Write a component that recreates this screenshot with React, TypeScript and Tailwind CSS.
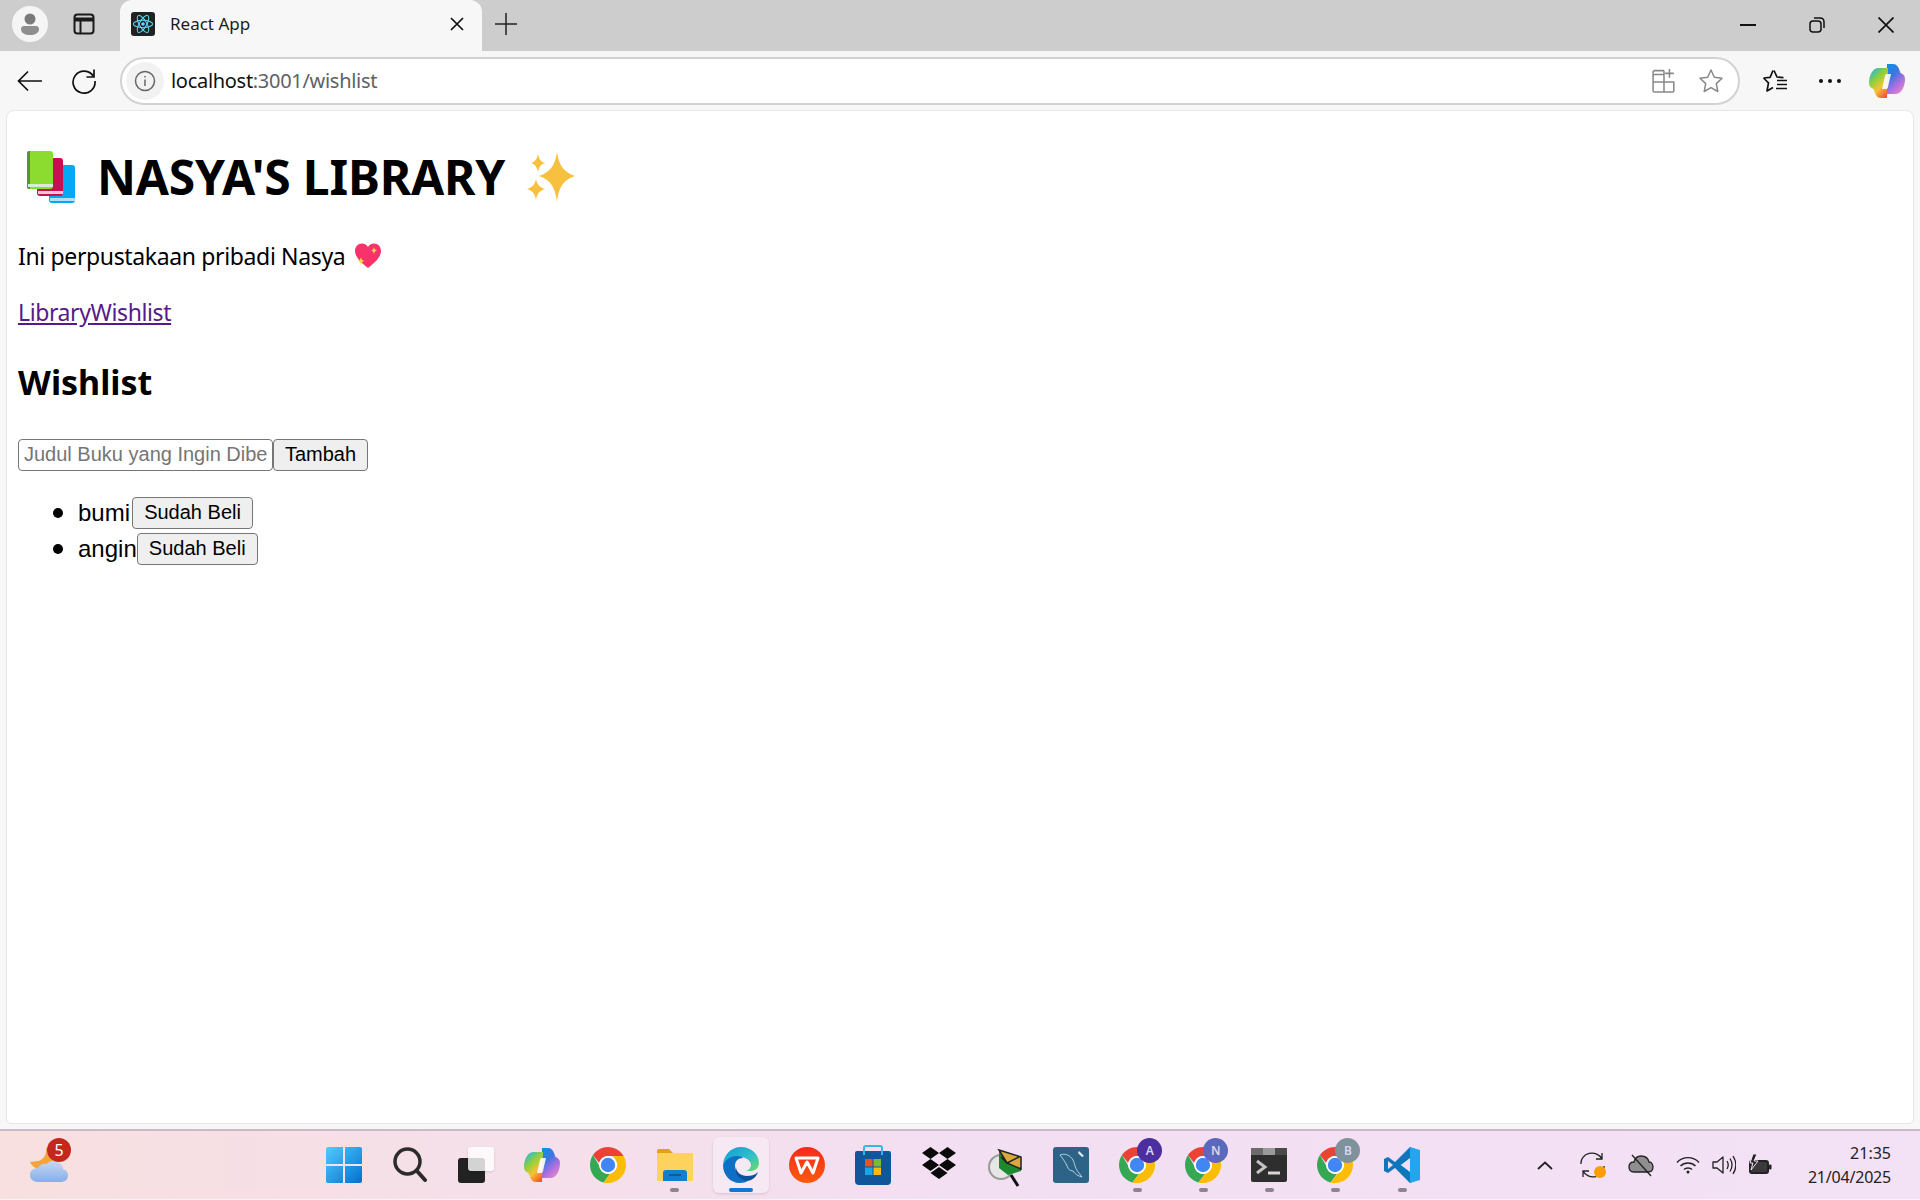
import React from "react";

const Chrome = ({ s = 36 }: { s?: number }) => (
  <svg width={s} height={s} viewBox="4 4 40 40">
    <path fill="#EA4335" d="M24 4c7.400 0 13.900 4 17.300 10H24c-4.800 0-8.800 3.400-9.800 7.900L7.300 13C11 7.600 17.100 4 24 4z" />
    <path fill="#34A853" d="M7.300 13l8.700 15c1.700 3 4.600 6 8 6 .8 0 1.600-.1 2.300-.3L19 43.400C10.500 41.200 4 33.400 4 24c0-4 1.200-7.800 3.300-11z" />
    <path fill="#FBBC04" d="M41.300 14C43 17 44 20.400 44 24c0 11-9 20-20 20-1.700 0-3.400-.2-5-.6L26.300 33.700C30.700 32.700 34 28.700 34 24c0-3.900-2-7.800-5-10z" />
    <circle cx="24" cy="24" r="10" fill="#fff" />
    <circle cx="24" cy="24" r="8" fill="#4285F4" />
  </svg>
);

const Copilot = ({ s = 36, id }: { s?: number; id: string }) => (
  <svg width={s} height={s} viewBox="0 0 36 36">
    <defs>
      <linearGradient id={id + "a"} x1="0.2" y1="0" x2="0.8" y2="1">
        <stop offset="0" stopColor="#0f8fe6" />
        <stop offset="0.35" stopColor="#3f74e0" />
        <stop offset="0.65" stopColor="#a66fe0" />
        <stop offset="1" stopColor="#ec86c8" />
      </linearGradient>
      <linearGradient id={id + "b"} x1="0.2" y1="0" x2="0.8" y2="1">
        <stop offset="0" stopColor="#29b8d8" />
        <stop offset="0.35" stopColor="#8fd13a" />
        <stop offset="0.65" stopColor="#f7c233" />
        <stop offset="1" stopColor="#f4553a" />
      </linearGradient>
    </defs>
    <path fill={`url(#${id}a)`} d="M18 1h6c3 0 5 2 6 5l1.500 4c3 1 4.500 3 4.500 6 0 7-3 15-10 15h-9z" />
    <path fill={`url(#${id}b)`} d="M18 35h-6c-3 0-5-2-6-5L4.500 26C1.500 25 0 23 0 20 0 13 3 5 10 5h9z" />
    <path fill="#fff" opacity="0.9" d="M22 11h-4c-1 0-1.500.5-2 2l-3 13h4c1 0 1.500-.5 2-2z" />
  </svg>
);

const Slot = ({ children, dot, active }: { children: React.ReactNode; dot?: boolean; active?: boolean }) => (
  <div className="relative flex h-[56px] w-[66.1px] shrink-0 items-center justify-center">
    {active && <div className="absolute left-[5px] top-0 h-[56px] w-[56px] rounded-md bg-[#f6e9f3] shadow-sm" />}
    <div className="relative flex items-center justify-center">{children}</div>
    {dot && <div className="absolute bottom-[1px] left-[29px] h-[4px] w-[9px] rounded-full bg-[#8d8490]" />}
    {active && <div className="absolute bottom-[1px] left-[21px] h-[4px] w-[24px] rounded-full bg-[#0f78d4]" />}
  </div>
);

const ChromeBadge = ({ l, c }: { l: string; c: string }) => (
  <div className="relative h-[36px] w-[36px]">
    <Chrome />
    <div
      className={`absolute -right-[7px] -top-[9px] flex h-[25px] w-[25px] items-center justify-center rounded-full text-[12px] font-semibold text-[#d9d6ec] ${c}`}
    >
      {l}
    </div>
  </div>
);

const ui = "font-['Noto_Sans','Open_Sans',sans-serif]";
const page = "font-['Noto_Sans','Open_Sans',sans-serif]";
const ctl = "font-['Liberation_Sans',Arial,sans-serif]";

const FormBtn = ({ children, w }: { children: React.ReactNode; w: string }) => (
  <button className={`h-[32px] ${w} shrink-0 rounded-[4px] border-[1.5px] border-[#767676] bg-[#efefef] pb-[2px] text-[20px] leading-none text-black ${ctl}`}>
    {children}
  </button>
);

export default function App() {
  return (
    <div className={`flex h-[1200px] w-[1920px] flex-col overflow-hidden bg-[#f7f7f7] ${ui}`}>
      {/* tab strip */}
      <div className="flex h-[51px] shrink-0 items-stretch bg-[#cdcdcd]">
        <div className="flex w-[60px] items-center justify-center pb-[3px]">
          <div className="flex h-[36px] w-[36px] items-center justify-center rounded-full bg-[#f5f5f5]">
            <svg width="20" height="24" viewBox="0 0 20 24">
              <circle cx="10" cy="7" r="5.500" fill="#7a7a7a" />
              <path d="M1 17c0-2 1.500-3 3-3h12c1.500 0 3 1 3 3 0 4-4 6-9 6s-9-2-9-6z" fill="#8e8e8e" />
            </svg>
          </div>
        </div>
        <div className="flex w-[60px] items-center justify-center pb-[3px] pr-[12px]">
          <svg width="22" height="22" viewBox="0 0 22 22" fill="none" stroke="#1a1a1a" strokeWidth="2">
            <rect x="1.500" y="1.500" width="19" height="19" rx="3" />
            <path d="M1.500 6.500h19" strokeWidth="4" />
            <path d="M7.500 7v13" />
          </svg>
        </div>
        <div className="flex w-[362px] items-center rounded-t-xl bg-[#f7f7f7] pb-[3px]">
          <div className="ml-[11px] flex h-[24px] w-[24px] items-center justify-center rounded-[3px] bg-[#222]">
            <svg width="22" height="22" viewBox="-12 -12 24 24" fill="none" stroke="#61dafb" strokeWidth="1.100">
              <circle r="2" fill="#61dafb" stroke="none" />
              <ellipse rx="10.500" ry="4" />
              <ellipse rx="10.500" ry="4" transform="rotate(60)" />
              <ellipse rx="10.500" ry="4" transform="rotate(120)" />
            </svg>
          </div>
          <span className="ml-[15px] text-[17px] text-[#1c1c1c]">React App</span>
          <svg className="ml-auto mr-[18px]" width="14" height="14" viewBox="0 0 14 14" stroke="#111" strokeWidth="1.700">
            <path d="M1 1l12 12M13 1L1 13" />
          </svg>
        </div>
        <div className="flex w-[48px] items-center justify-center pb-[3px]">
          <svg width="22" height="22" viewBox="0 0 22 22" stroke="#222" strokeWidth="1.500">
            <path d="M11 0v22M0 11h22" />
          </svg>
        </div>
        <div className="ml-auto flex items-center pb-[1px]">
          <div className="flex w-[69px] justify-center">
            <svg width="16" height="2" viewBox="0 0 16 2"><path d="M0 1h16" stroke="#111" strokeWidth="2" /></svg>
          </div>
          <div className="flex w-[69px] justify-center">
            <svg width="16" height="16" viewBox="0 0 16 16" fill="none" stroke="#111" strokeWidth="1.500">
              <rect x="1" y="4" width="11" height="11" rx="3" />
              <path d="M5 1h6c2.500 0 4 1.500 4 4v6" />
            </svg>
          </div>
          <div className="flex w-[69px] justify-center">
            <svg width="16" height="16" viewBox="0 0 16 16" stroke="#111" strokeWidth="1.700">
              <path d="M.5.500l15 15M15.500.500l-15 15" />
            </svg>
          </div>
        </div>
      </div>

      {/* toolbar */}
      <div className="flex h-[59px] shrink-0 items-center">
        <div className="flex w-[59px] justify-center">
          <svg width="26" height="22" viewBox="0 0 26 22" fill="none" stroke="#111" strokeWidth="1.700">
            <path d="M25 11H1.500M11 1.500L1.500 11l9.500 9.500" />
          </svg>
        </div>
        <div className="flex w-[50px] justify-center">
          <svg width="26" height="26" viewBox="0 0 26 26" fill="none" stroke="#111" strokeWidth="1.700">
            <path d="M22.500 8.500A11 11 0 1 0 24 13" />
            <path d="M23 1.500v7.500h-7.500" />
          </svg>
        </div>
        <div className="ml-[11px] flex h-[48px] w-[1620px] shrink-0 items-center rounded-full border-[2px] border-[#d2d2d2] bg-white">
          <div className="ml-[4px] flex h-[38px] w-[38px] items-center justify-center rounded-full bg-[#f2f2f2]">
            <svg width="22" height="22" viewBox="0 0 22 22" fill="none" stroke="#666" strokeWidth="1.500">
              <circle cx="11" cy="11" r="9.500" />
              <path d="M11 9.500v6.500M11 6v1.500" />
            </svg>
          </div>
          <span className="ml-[7px] text-[20px] tracking-[-0.3px] text-[#111]">
            localhost<span className="text-[#5d6168]">:3001/wishlist</span>
          </span>
          <div className="ml-auto flex items-center">
            <svg width="24" height="24" viewBox="0 0 22 22" fill="none" stroke="#888" strokeWidth="1.400">
              <path d="M11 5H2.500a1.500 1.500 0 0 0-1.500 1.500V20a1 1 0 0 0 1 1h17a1 1 0 0 0 1-1v-8H1M11 1.500H2.500A1.500 1.500 0 0 0 1 3v9M11 1.500V21" />
              <path d="M16 0v8M12 4h8" />
            </svg>
            <svg className="ml-[22px] mr-[14px]" width="26" height="26" viewBox="0 0 26 26" fill="none" stroke="#888" strokeWidth="1.500" strokeLinejoin="round">
              <path d="M13 2l3.300 7.300 7.700.9-5.700 5.400 1.500 7.900L13 19.600l-6.800 3.900 1.500-7.900L2 10.200l7.700-.9z" />
            </svg>
          </div>
        </div>
        <div className="ml-[15px] flex w-[40px] justify-center">
          <svg width="26" height="24" viewBox="0 0 26 24" fill="none" stroke="#111" strokeWidth="1.700" strokeLinejoin="round">
            <path d="M12 1.500l3 6.500 6.500.7M1.500 9l6.600-.7L11 1.500M1.500 9l5 4.800L5 22l6-3.500" />
            <path d="M15 11.500h10M15 15.500h10M14 19.500h11" />
          </svg>
        </div>
        <div className="ml-[15px] flex w-[40px] items-center justify-center gap-[5px]">
          <span className="h-[4px] w-[4px] rounded-full bg-[#111]" />
          <span className="h-[4px] w-[4px] rounded-full bg-[#111]" />
          <span className="h-[4px] w-[4px] rounded-full bg-[#111]" />
        </div>
        <div className="ml-[19px]">
          <Copilot id="cp1" />
        </div>
      </div>

      {/* page */}
      <div className={`mx-[6px] h-[1014px] shrink-0 rounded-t-lg rounded-b-md border border-[#e6e6e6] bg-white px-[11px] text-black ${page}`}>
        <h1 className="mt-[34px] flex h-[64px] items-center text-[48px] font-bold leading-none tracking-[-0.2px]">
          <svg className="ml-[9px] shrink-0" width="48" height="52" viewBox="0 0 48 52">
            <rect x="22" y="14" width="26" height="38" rx="3" fill="#03a9f4" />
            <rect x="23" y="47" width="25" height="3" fill="#b3dff5" />
            <rect x="10" y="7" width="26" height="38" rx="3" fill="#c8104f" />
            <rect x="11" y="40" width="25" height="3" fill="#f3c6d6" />
            <rect x="0" y="0" width="26" height="38" rx="3" fill="#8bdc2f" />
            <path d="M3 0v38H2a2 2 0 0 1-2-2V2a2 2 0 0 1 2-2z" fill="#4a9a3a" />
            <rect x="1" y="33" width="25" height="3" fill="#d6ecd6" />
          </svg>
          <span className="ml-[22px] whitespace-nowrap">NASYA&apos;S LIBRARY</span>
          <svg className="ml-[22px] shrink-0" width="48" height="50" viewBox="0 0 48 50" fill="#f8c03f">
            <path d="M30 0c2 14 7 20 18 24-11 4-16 10-18 26-2-16-7-22-18-26C23 20 28 14 30 0z" />
            <path d="M11 2c1 5 3 8 7 9-4 1-6 4-7 9-1-5-3-8-7-9 4-1 6-4 7-9z" />
            <path d="M9 27c1 5 3 8 9 10-6 2-8 5-9 11-1-6-3-9-9-11 6-2 8-5 9-10z" />
          </svg>
        </h1>
        <p className="mt-[31px] flex h-[32px] items-center text-[23px] leading-none tracking-[-0.36px]">
          <span>Ini perpustakaan pribadi Nasya</span>
          <svg className="ml-[10px]" width="26" height="26" viewBox="0 0 26 26">
            <path d="M13 25C4 18 0 13 0 8c0-4.500 3.200-7.500 7-7.500 2.600 0 4.800 1.400 6 3.600C14.200 1.900 16.400.500 19 .500c3.800 0 7 3 7 7.500 0 5-4 10-13 17z" fill="#f8326a" />
            <path d="M19 4c.4 2 1 3 3 3.500-2 .5-2.600 1.500-3 3.500-.4-2-1-3-3-3.500 2-.5 2.600-1.500 3-3.500zM6 14c.4 2.400 1.200 3.600 3.500 4-2.300.4-3.100 1.600-3.500 4-.4-2.400-1.200-3.600-3.500-4 2.300-.4 3.100-1.600 3.500-4z" fill="#ffd34d" />
          </svg>
        </p>
        <nav className="mt-[24px] h-[32px] text-[23px] leading-[32px] tracking-[-0.4px] text-[#551a8b] underline">
          <a href="#library">Library</a>
          <a href="#wishlist">Wishlist</a>
        </nav>
        <h2 className="mt-[30px] h-[48px] text-[34px] font-bold leading-[48px]">Wishlist</h2>
        <form className="mt-[33px] flex h-[32px]">
          <input
            readOnly
            placeholder="Judul Buku yang Ingin Dibeli"
            className={`h-[32px] w-[255px] rounded-[4px] border-[1.5px] border-[#767676] bg-white pb-[2px] pl-[5px] pr-[4px] text-[20px] text-black placeholder:text-[#757575] ${ctl}`}
          />
          <FormBtn w="w-[95px]">Tambah</FormBtn>
        </form>
        <ul className={`mt-[26px] list-none pl-[35px] text-[24px] leading-none ${ctl}`}>
          <li className="flex h-[36px] items-start">
            <div className="flex h-[32px] items-center">
              <span className="mr-[15px] h-[10px] w-[10px] rounded-full bg-black" />
              <span className="mr-[2px]">bumi</span>
              <FormBtn w="w-[121px]">Sudah Beli</FormBtn>
            </div>
          </li>
          <li className="flex h-[36px] items-start">
            <div className="flex h-[32px] items-center">
              <span className="mr-[15px] h-[10px] w-[10px] rounded-full bg-black" />
              <span>angin</span>
              <FormBtn w="w-[121px]">Sudah Beli</FormBtn>
            </div>
          </li>
        </ul>
      </div>

      {/* taskbar */}
      <div className="mt-[5px] flex h-[70px] shrink-0 items-center border-t-[2px] border-[#c9b9c7] bg-gradient-to-r from-[#f8e0e0] via-[#f3dff2] to-[#f3e1f5] text-[#222]">
        <div className="flex w-[311px] shrink-0 pl-[30px]">
          <div className="relative h-[36px] w-[36px]">
            <svg width="38" height="36" viewBox="0 0 38 36">
              <defs>
                <linearGradient id="cloud" x1="0" y1="0" x2="0" y2="1">
                  <stop offset="0" stopColor="#c4d8f5" />
                  <stop offset="1" stopColor="#87aee8" />
                </linearGradient>
              </defs>
              <path d="M16 1c1 7-3 12-8 13l-8 1c3 6 9 9 15 7 5-2 8-6 8-10C23 7 20 3 16 1z" fill="#f3a53d" />
              <path d="M30 35H8c-5 0-8-3-8-7 0-5 4-7 8-7 2-4 6-5 9-4 2-3 7-4 10-2 4 1 6 4 6 7 3 1 5 3 5 6 0 5-3 7-8 7z" fill="url(#cloud)" />
            </svg>
            <div className="absolute left-[17px] -top-[9px] flex h-[24px] w-[24px] items-center justify-center rounded-full bg-[#c4281c] text-[16px] text-white">5</div>
          </div>
        </div>
        <div className="flex shrink-0 items-center">
          <Slot>
            <svg width="36" height="36" viewBox="0 0 36 36">
              <defs>
                <linearGradient id="win" x1="0" y1="0" x2="1" y2="1">
                  <stop offset="0" stopColor="#52cbff" />
                  <stop offset="1" stopColor="#0071d0" />
                </linearGradient>
              </defs>
              <path fill="url(#win)" d="M2 0h15v17H0V2a2 2 0 0 1 2-2zM19 0h15a2 2 0 0 1 2 2v15H19zM0 19h17v17H2a2 2 0 0 1-2-2zM19 19h17v15a2 2 0 0 1-2 2H19z" />
            </svg>
          </Slot>
          <Slot>
            <svg width="34" height="36" viewBox="0 0 34 36" fill="none" stroke="#2b2b2b">
              <circle cx="14.500" cy="14.500" r="12.500" strokeWidth="3.500" />
              <path d="M24 24l8 9" strokeWidth="4" strokeLinecap="round" />
            </svg>
          </Slot>
          <Slot>
            <div className="relative h-[36px] w-[36px]">
              <div className="absolute bottom-0 left-0 h-[25px] w-[27px] rounded-[3px] bg-[#222]" />
              <div className="absolute right-0 top-0 h-[24px] w-[26px] rounded-[3px] bg-white/80 shadow-sm" />
            </div>
          </Slot>
          <Slot><Copilot id="cp2" /></Slot>
          <Slot><Chrome /></Slot>
          <Slot dot>
            <svg width="36" height="32" viewBox="0 0 36 32">
              <path d="M0 2a2 2 0 0 1 2-2h10l4 4h18a2 2 0 0 1 2 2v2H0z" fill="#e2a40a" />
              <rect y="4" width="36" height="28" rx="1" fill="#fdd25f" />
              <path d="M6 32v-8a3 3 0 0 1 3-3h18a3 3 0 0 1 3 3v8z" fill="#0f7fd0" />
              <path d="M12 26h12" stroke="#0a4f8f" strokeWidth="1.500" />
            </svg>
          </Slot>
          <Slot active>
            <svg width="36" height="36" viewBox="0 0 36 36">
              <defs>
                <linearGradient id="edge" x1="0" y1="0" x2="1" y2="1">
                  <stop offset="0" stopColor="#0c9bd8" />
                  <stop offset="0.6" stopColor="#35c1c6" />
                  <stop offset="1" stopColor="#6fdc5c" />
                </linearGradient>
              </defs>
              <path fill="url(#edge)" d="M18 0c11 0 18 8 18 16 0 5-4 8-8 8h-5c3-1 5-3 5-6 0-4-5-8-11-8C8 10 2 14 0 18 .5 8 8 0 18 0z" />
              <path fill="#0f6fc6" d="M0 18c2-5 7-9 14-9 3 0 5 .8 6 2-5 0-8 3-8 8 0 7 6 13 13 15-2 1-5 2-8 2C7 36 0 28 0 18z" />
              <path fill="#0c4f9c" d="M13 20c0 5 5 9 11 9 4 0 8-1 11-4-2 6-7 9-12 9-7-2-12-8-10-14z" />
            </svg>
          </Slot>
          <Slot>
            <svg width="36" height="36" viewBox="0 0 36 36">
              <defs>
                <linearGradient id="wps" x1="0" y1="0" x2="0" y2="1">
                  <stop offset="0" stopColor="#f42a1a" />
                  <stop offset="1" stopColor="#fb5a0f" />
                </linearGradient>
              </defs>
              <circle cx="18" cy="18" r="18" fill="url(#wps)" />
              <path d="M7 11h22l-5 15-6-11-6 11z" fill="none" stroke="#fff" strokeWidth="3" strokeLinejoin="round" />
            </svg>
          </Slot>
          <Slot>
            <svg width="36" height="40" viewBox="0 0 36 40">
              <path d="M2 6h32a2 2 0 0 1 2 2v28a4 4 0 0 1-4 4H4a4 4 0 0 1-4-4V8a2 2 0 0 1 2-2z" fill="#11559a" />
              <path d="M9 10V3a2 2 0 0 1 2-2h14a2 2 0 0 1 2 2v7" fill="none" stroke="#35b6ee" strokeWidth="2" />
              <rect x="10" y="14" width="7.500" height="7.500" fill="#e8502a" />
              <rect x="18.500" y="14" width="7.500" height="7.500" fill="#7fba2a" />
              <rect x="10" y="22.500" width="7.500" height="7.500" fill="#18a5ea" />
              <rect x="18.500" y="22.500" width="7.500" height="7.500" fill="#fdb813" />
            </svg>
          </Slot>
          <Slot>
            <svg width="36" height="36" viewBox="0 0 36 36" fill="#0a0a0a">
              <path d="M9.500 0l8.500 6-8.500 6L1 6zM26.500 0L35 6l-8.500 6L18 6zM1 18l8.500-6 8.500 6-8.500 6zM35 18l-8.500 6-8.500-6 8.500-6zM9.500 26l8.500-6 8.500 6-8.500 6z" />
            </svg>
          </Slot>
          <Slot>
            <svg width="36" height="44" viewBox="0 0 36 44">
              <circle cx="14" cy="24" r="12" fill="#e6e6e6" stroke="#999" strokeWidth="2" />
              <path d="M24 32l7 11" stroke="#111" strokeWidth="3" />
              <path d="M12 7l22 7v14l-13 4-9-7z" fill="#1b8a2e" />
              <path d="M12 7l22 7v12L20 20z" fill="#d9a93b" stroke="#222" strokeWidth="1.500" />
              <path d="M14 14l6 6 12-6" fill="none" stroke="#222" strokeWidth="1.500" />
            </svg>
          </Slot>
          <Slot>
            <svg width="36" height="36" viewBox="0 0 36 36">
              <rect width="36" height="36" rx="3" fill="#2d6387" />
              <path d="M7 8c5-2 10 0 13 5 2 4 2 9 6 13l3 4c-4-1-7-3-9-6-3 0-5-2-6-5-1-3-3-5-4-7z" fill="none" stroke="#b5cfdf" strokeWidth="1" />
              <path d="M26 4l5 5-2 1-4-4z" fill="#e6eef3" />
            </svg>
          </Slot>
          <Slot dot><ChromeBadge l="A" c="bg-[#4b2ea0]" /></Slot>
          <Slot dot><ChromeBadge l="N" c="bg-[#5b68bd]" /></Slot>
          <Slot dot>
            <svg width="36" height="34" viewBox="0 0 36 34">
              <rect width="36" height="34" rx="2" fill="#2e2e2e" />
              <rect width="12" height="7" fill="#6c6c6c" />
              <rect x="12" width="12" height="7" fill="#9a9a9a" />
              <rect x="24" width="12" height="7" fill="#4a4a4a" />
              <path d="M6 13l8 6-8 6" fill="none" stroke="#c4c4c4" strokeWidth="3" />
              <path d="M17 25h12" stroke="#d6d6d6" strokeWidth="3" />
            </svg>
          </Slot>
          <Slot dot><ChromeBadge l="B" c="bg-[#7f929c]" /></Slot>
          <Slot dot>
            <svg width="36" height="36" viewBox="0 0 36 36">
              <path d="M26 0L11 15 4 10 0 12v12l4 2 7-5 15 15 6-3V3z" fill="#0f76bc" />
              <path d="M26 0l10 3v30l-10 3V12l-10 6 10 6.500z" fill="#23a6ef" />
              <path d="M26 11v14l-9-7z" fill="#f3dff2" />
              <path d="M4 14l5 4-5 4z" fill="#f3dff2" />
            </svg>
          </Slot>
        </div>
        <div className="ml-auto flex shrink-0 items-center pr-[29px]">
          <svg width="16" height="9" viewBox="0 0 16 9" fill="none" stroke="#222" strokeWidth="1.800">
            <path d="M1 8l7-6.500L15 8" />
          </svg>
          <div className="relative ml-[27px] h-[26px] w-[26px]">
            <svg width="26" height="26" viewBox="0 0 26 26" fill="none" stroke="#222" strokeWidth="1.300">
              <path d="M1 12A11 10 0 0 1 22 7M22 1v6h-6M24 14A11 10 0 0 1 3 19M3 25v-6h6" />
            </svg>
            <div className="absolute bottom-0 right-0 h-[12px] w-[12px] rounded-full bg-[#ff9c0a]" />
          </div>
          <svg className="ml-[22px]" width="26" height="24" viewBox="0 0 26 24">
            <path d="M6 19C2 19 1 16 1 14c0-3 2-5 5-5 1-4 4-6 7-6 4 0 7 2 8 6 3 0 4 3 4 5 0 3-2 5-5 5z" fill="#8f8f8f" stroke="#222" strokeWidth="1.300" />
            <path d="M4 2l19 21" stroke="#222" strokeWidth="1.300" />
          </svg>
          <svg className="ml-[22px]" width="24" height="18" viewBox="0 0 24 18" fill="none" stroke="#222" strokeWidth="1.400">
            <path d="M1 6.500c6-6.500 16-6.500 22 0M4.500 10c4-4 11-4 15 0M8 13.500c2-2 6-2 8 0" />
            <circle cx="12" cy="16" r="1.500" fill="#222" stroke="none" />
          </svg>
          <svg className="ml-[12px]" width="24" height="22" viewBox="0 0 24 22" fill="none" stroke="#222" strokeWidth="1.300" strokeLinejoin="round">
            <path d="M1 8v6h4l6 5V3L5 8zM15 7c1.500 2.500 1.500 5.500 0 8M18 4.500c2.500 4 2.500 9 0 13M21 2c3.500 5.500 3.500 12.500 0 18" />
          </svg>
          <svg className="ml-[12px]" width="24" height="22" viewBox="0 0 24 22">
            <rect x="2" y="7" width="18" height="12" rx="2" fill="#3a3a3a" stroke="#222" strokeWidth="2" />
            <rect x="21" y="10.500" width="2.500" height="5" rx="1" fill="#222" />
            <path d="M5 0L2 9h3l-2 7 7-9H6l3-7z" fill="#222" stroke="#f3e1f5" strokeWidth="1" />
          </svg>
          <div className="ml-[19px] w-[100px] text-right text-[16px] leading-[24px] text-[#222]">
            <div>21:35</div>
            <div className="tracking-[-0.2px]">21/04/2025</div>
          </div>
        </div>
      </div>
    </div>
  );
}
